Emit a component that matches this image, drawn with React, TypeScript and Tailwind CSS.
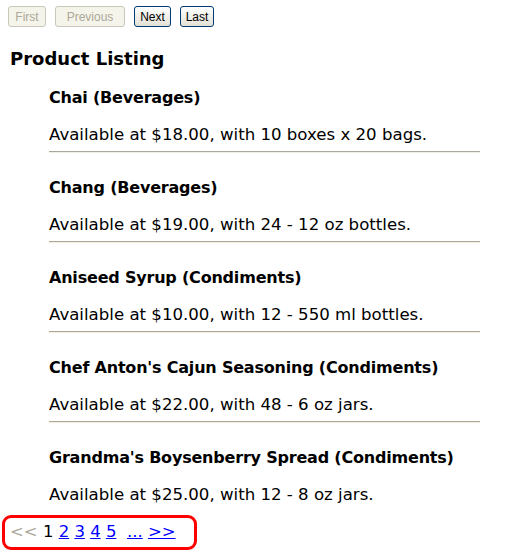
import React from 'react';

const products = [
  { name: 'Chai', cat: 'Beverages', price: '18.00', qty: '10 boxes x 20 bags' },
  { name: 'Chang', cat: 'Beverages', price: '19.00', qty: '24 - 12 oz bottles' },
  { name: 'Aniseed Syrup', cat: 'Condiments', price: '10.00', qty: '12 - 550 ml bottles' },
  { name: "Chef Anton's Cajun Seasoning", cat: 'Condiments', price: '22.00', qty: '48 - 6 oz jars' },
  { name: "Grandma's Boysenberry Spread", cat: 'Condiments', price: '25.00', qty: '12 - 8 oz jars' },
];

const App = () => {
  return (
    <div className="min-h-[551px] w-[505px] bg-white font-['DejaVu_Sans',sans-serif] text-black">
      <div className="flex gap-[9px] pl-[8px] pt-[6px] font-['Liberation_Sans',sans-serif] text-[12px]">
        <button className="h-[21px] w-[38px] rounded-[3px] border border-[#c9c7ba] bg-[#f5f4ea] text-[#aca899]">First</button>
        <button className="h-[21px] w-[70px] rounded-[3px] border border-[#c9c7ba] bg-[#f5f4ea] text-[#aca899]">Previous</button>
        <button className="h-[21px] w-[37px] rounded-[3px] border border-[#003c74] bg-gradient-to-b from-white to-[#e3e1d6]">Next</button>
        <button className="h-[21px] w-[34px] rounded-[3px] border border-[#003c74] bg-gradient-to-b from-white to-[#e3e1d6]">Last</button>
      </div>
      <h2 className="ml-[10px] mt-[21px] text-[18px] font-bold leading-[22px]">Product Listing</h2>
      <div className="ml-[49px] w-[431px]">
        {products.map((p, i) => (
          <div key={p.name} className="pt-[25px] first:pt-[18px]">
            <div className="text-[16px] font-bold leading-[20px] tracking-[-0.2px]">
              {p.name} ({p.cat})
            </div>
            <div className="mt-[17px] text-[16.6px] leading-[20px]">
              Available at ${p.price}, with {p.qty}.
            </div>
            {i < products.length - 1 && (
              <hr className="mt-[6px] border-t border-b border-t-[#aca899] border-b-[#f1efe2]" />
            )}
          </div>
        ))}
      </div>
      <div className="ml-[2px] mt-[10px] flex h-[35px] w-[195px] items-center rounded-[9px] border-[3px] border-[#ff0000] pl-[5px] text-[16.5px]">
        <span className="whitespace-pre">
          <span className="text-[#aca899]">&lt;&lt;</span>{' '}
          <span>1</span>{' '}
          <a href="#" className="text-[#0000ff] underline">2</a>{' '}
          <a href="#" className="text-[#0000ff] underline">3</a>{' '}
          <a href="#" className="text-[#0000ff] underline">4</a>{' '}
          <a href="#" className="text-[#0000ff] underline">5</a>{'  '}
          <a href="#" className="text-[#0000ff] underline">...</a>{' '}
          <a href="#" className="text-[#0000ff] underline">&gt;&gt;</a>
        </span>
      </div>
    </div>
  );
};

export default App;
